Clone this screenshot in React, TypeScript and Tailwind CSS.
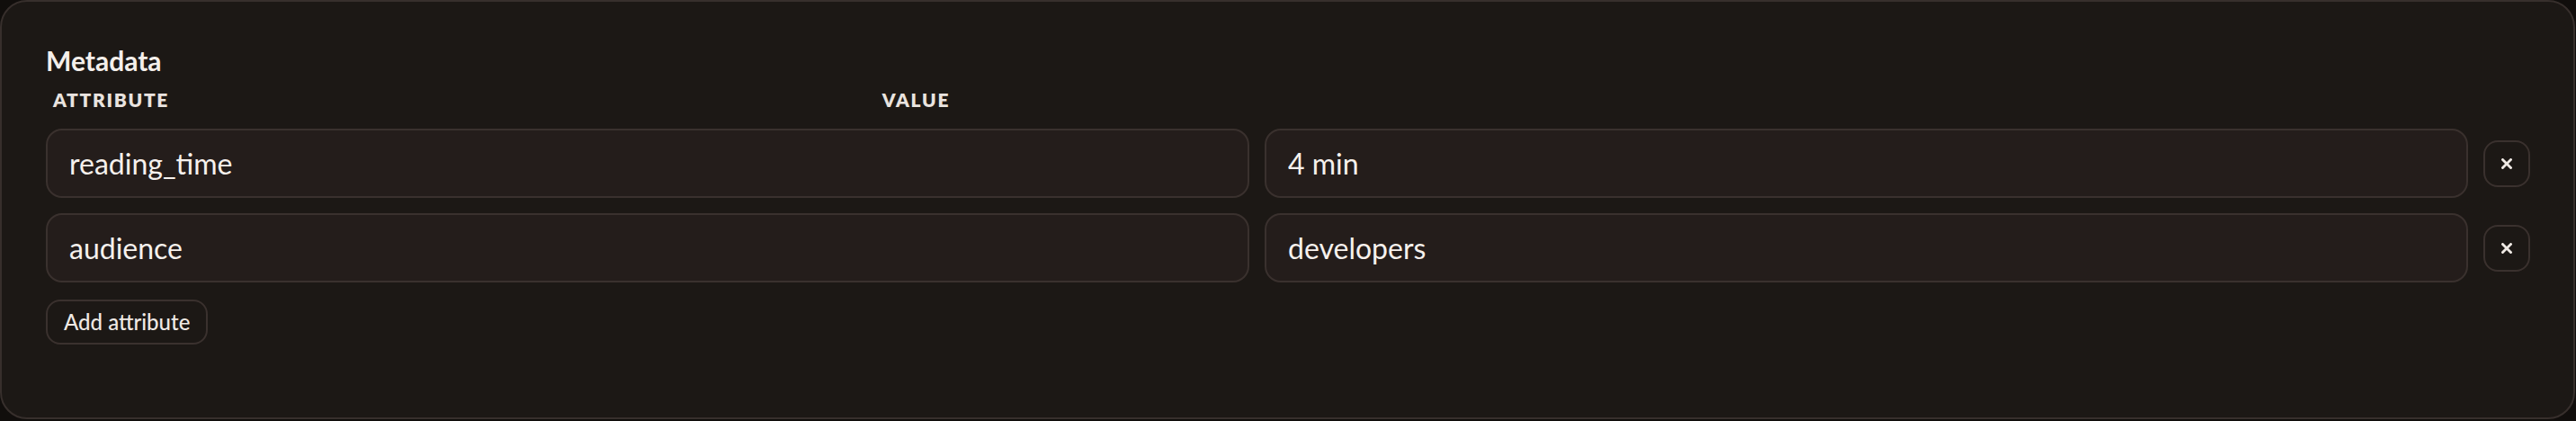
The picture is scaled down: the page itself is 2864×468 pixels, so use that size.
import { useState } from "react";

type Row = { key: string; value: string };

const initialRows: Row[] = [
  { key: "reading_time", value: "4 min" },
  { key: "audience", value: "developers" },
];

function CloseIcon() {
  return (
    <svg width="12" height="12" viewBox="0 0 12 12" fill="none" aria-hidden="true">
      <path d="M1.5 1.5l9 9M10.5 1.5l-9 9" stroke="currentColor" strokeWidth="2.8" strokeLinecap="square" />
    </svg>
  );
}

function MetadataEditor() {
  const [rows, setRows] = useState<Row[]>(initialRows);

  const update = (i: number, patch: Partial<Row>) =>
    setRows((prev) => prev.map((r, idx) => (idx === i ? { ...r, ...patch } : r)));

  return (
    <div className="h-[466px] w-[2863px] rounded-[30px] border-2 border-[#372f2c] bg-[#1c1815] pl-[49px] pr-[48px] pt-[47px]">
      <h2 className="text-[30px] leading-[36px] font-bold text-[#f4efeb]">Metadata</h2>
      <div className="mt-[14px] grid grid-cols-3 text-[21px] leading-[24px] font-extrabold uppercase tracking-[0.08em] text-[#e9e3df]">
        <span className="pl-[8px]">Attribute</span>
        <span className="pl-[9px]">Value</span>
      </div>
      <div className="mt-[20px] flex flex-col gap-[17px]">
        {rows.map((row, i) => (
          <div key={i} className="flex items-center gap-[17px]">
            <input
              value={row.key}
              onChange={(e) => update(i, { key: e.target.value })}
              className="h-[77px] min-w-0 flex-1 rounded-[18px] border-2 border-[#3a312e] bg-[#241d1b] px-[24px] text-[32px] text-[#f6f1ed] outline-none"
            />
            <input
              value={row.value}
              onChange={(e) => update(i, { value: e.target.value })}
              className="h-[77px] min-w-0 flex-1 rounded-[18px] border-2 border-[#3a312e] bg-[#241d1b] px-[24px] text-[32px] text-[#f6f1ed] outline-none"
            />
            <button
              type="button"
              onClick={() => setRows((prev) => prev.filter((_, idx) => idx !== i))}
              className="flex h-[52px] w-[52px] shrink-0 items-center justify-center rounded-[16px] border-2 border-[#3a312e] bg-[#1c1815] text-[#efe9e4]"
            >
              <CloseIcon />
            </button>
          </div>
        ))}
        <div className="pt-[2px]">
          <button
            type="button"
            onClick={() => setRows((prev) => [...prev, { key: "", value: "" }])}
            className="h-[50px] rounded-[16px] border-2 border-[#3a312e] bg-[#1c1815] px-[18px] text-[24px] font-medium text-[#efe9e4]"
          >
            Add attribute
          </button>
        </div>
      </div>
    </div>
  );
}

export default function App() {
  return (
    <div className="h-[468px] w-[2864px] bg-[#110e0c]" style={{ fontFamily: "Lato, 'Noto Sans', sans-serif" }}>
      <MetadataEditor />
    </div>
  );
}
